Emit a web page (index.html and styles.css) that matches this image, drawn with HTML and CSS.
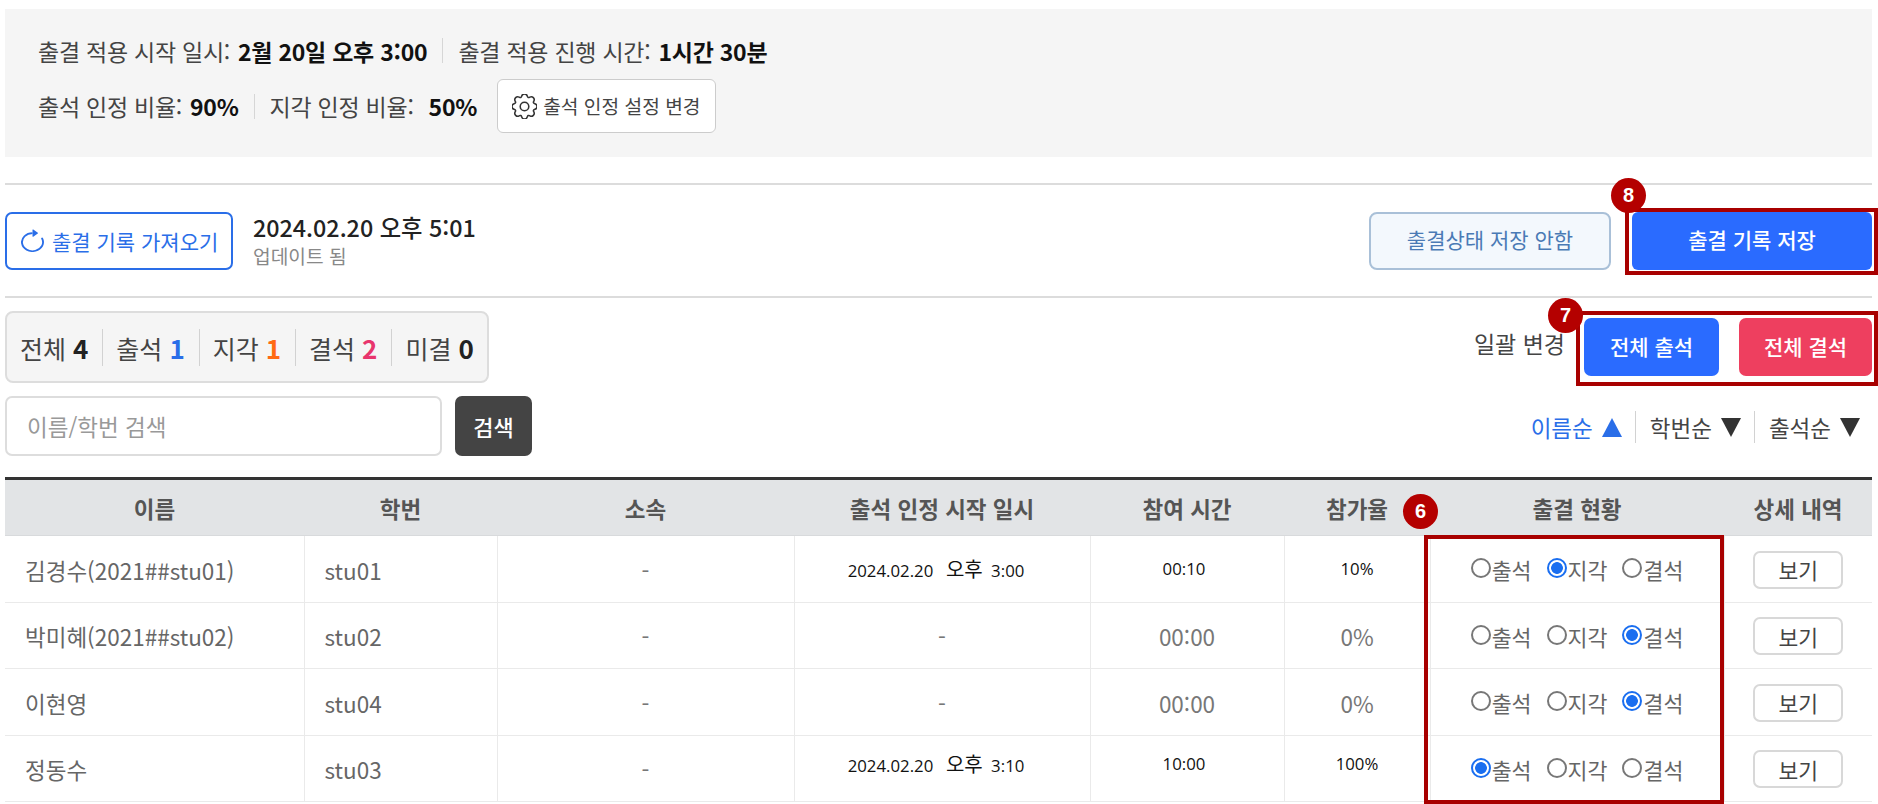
FILE: index.html
```html
<!DOCTYPE html>
<html lang="ko">
<head>
<meta charset="utf-8">
<title>출결 관리</title>
<link rel="stylesheet" href="styles.css">
</head>
<body>
<main class="page">
  <section class="info">
    <div class="info-row">
      <span class="info-label">출결 적용 시작 일시:</span><strong>2월 20일 오후 3:00</strong>
      <i class="info-sep"></i>
      <span class="info-label">출결 적용 진행 시간:</span><strong>1시간 30분</strong>
    </div>
    <div class="info-row">
      <span class="info-label">출석 인정 비율:</span><strong>90%</strong>
      <i class="info-sep"></i>
      <span class="info-label">지각 인정 비율:</span><strong class="wide">50%</strong>
      <button class="btn-setting" type="button">
        <svg class="ico-gear" viewBox="0 0 16 16" fill="none" stroke="#333" stroke-width="1"><circle cx="8" cy="8" r="2.75"/><path d="M9.796 1.343c-.527-1.79-3.065-1.79-3.592 0l-.094.319a.873.873 0 0 1-1.255.52l-.292-.16c-1.64-.892-3.433.902-2.54 2.541l.159.292a.873.873 0 0 1-.52 1.255l-.319.094c-1.79.527-1.79 3.065 0 3.592l.319.094a.873.873 0 0 1 .52 1.255l-.16.292c-.892 1.64.901 3.434 2.541 2.54l.292-.159a.873.873 0 0 1 1.255.52l.094.319c.527 1.79 3.065 1.79 3.592 0l.094-.319a.873.873 0 0 1 1.255-.52l.292.16c1.64.893 3.434-.902 2.54-2.541l-.159-.292a.873.873 0 0 1 .52-1.255l.319-.094c1.79-.527 1.79-3.065 0-3.592l-.319-.094a.873.873 0 0 1-.52-1.255l.16-.292c.893-1.64-.902-3.433-2.541-2.54l-.292.159a.873.873 0 0 1-1.255-.52l-.094-.319z"/></svg>
        출석 인정 설정 변경
      </button>
    </div>
  </section>

  <section class="toolbar">
    <button class="btn-fetch" type="button">
      <svg class="ico-refresh" viewBox="2 0 12 14" preserveAspectRatio="none" fill="#2a6ee8"><path fill-rule="evenodd" d="M8 3a5 5 0 1 0 4.546 2.914.5.5 0 0 1 .908-.417A6 6 0 1 1 8 2v1z"/><path d="M8 4.466V.534a.25.25 0 0 1 .41-.192l2.36 1.966c.12.1.12.284 0 .384L8.41 4.658A.25.25 0 0 1 8 4.466z"/></svg>
      출결 기록 가져오기
    </button>
    <div class="updated">
      <div class="updated-time">2024.02.20 오후 5:01</div>
      <div class="updated-note">업데이트 됨</div>
    </div>
    <div class="toolbar-right">
      <button class="btn-nosave" type="button">출결상태 저장 안함</button>
      <div class="marked">
        <button class="btn-save" type="button">출결 기록 저장</button>
        <span class="outline outline-save"></span>
        <span class="badge badge-8">8</span>
      </div>
    </div>
  </section>

  <section class="filters">
    <div class="filters-left">
      <div class="stats">
        <span class="stat">전체 <b>4</b></span>
        <span class="stat">출석 <b class="c-blue">1</b></span>
        <span class="stat">지각 <b class="c-orange">1</b></span>
        <span class="stat">결석 <b class="c-pink">2</b></span>
        <span class="stat">미결 <b>0</b></span>
      </div>
      <div class="search">
        <input class="search-input" type="text" placeholder="이름/학번 검색">
        <button class="btn-search" type="button">검색</button>
      </div>
    </div>
    <div class="filters-right">
      <div class="bulk">
        <span class="bulk-label">일괄 변경</span>
        <div class="marked bulk-btns">
          <button class="btn-all btn-all-ok" type="button">전체 출석</button>
          <button class="btn-all btn-all-no" type="button">전체 결석</button>
          <span class="outline outline-bulk"></span>
          <span class="badge badge-7">7</span>
        </div>
      </div>
      <div class="sort">
        <span class="sort-item active">이름순 <i class="tri tri-up"></i></span>
        <span class="sort-item">학번순 <i class="tri tri-down"></i></span>
        <span class="sort-item">출석순 <i class="tri tri-down"></i></span>
      </div>
    </div>
  </section>

  <section class="table-wrap">
    <table class="grid">
      <colgroup>
        <col class="col-name"><col class="col-id"><col class="col-org"><col class="col-date"><col class="col-time"><col class="col-rate"><col class="col-status"><col class="col-detail">
      </colgroup>
      <thead>
        <tr><th>이름</th><th>학번</th><th>소속</th><th>출석 인정 시작 일시</th><th>참여 시간</th><th>참가율</th><th>출결 현황</th><th>상세 내역</th></tr>
      </thead>
      <tbody>
        <tr>
          <td class="left">김경수(2021##stu01)</td><td class="left">stu01</td><td>-</td>
          <td class="pasted dated">2024.02.20&nbsp; <span class="ampm">오후</span> 3:00</td><td class="pasted shifted">00:10</td><td class="pasted">10%</td>
          <td><div class="radios">
            <label class="radio"><input type="radio" name="r1">출석</label>
            <label class="radio"><input type="radio" name="r1" checked>지각</label>
            <label class="radio"><input type="radio" name="r1">결석</label>
          </div></td>
          <td><button class="btn-view" type="button">보기</button></td>
        </tr>
        <tr>
          <td class="left">박미혜(2021##stu02)</td><td class="left">stu02</td><td>-</td>
          <td>-</td><td>00:00</td><td>0%</td>
          <td><div class="radios">
            <label class="radio"><input type="radio" name="r2">출석</label>
            <label class="radio"><input type="radio" name="r2">지각</label>
            <label class="radio"><input type="radio" name="r2" checked>결석</label>
          </div></td>
          <td><button class="btn-view" type="button">보기</button></td>
        </tr>
        <tr>
          <td class="left">이현영</td><td class="left">stu04</td><td>-</td>
          <td>-</td><td>00:00</td><td>0%</td>
          <td><div class="radios">
            <label class="radio"><input type="radio" name="r3">출석</label>
            <label class="radio"><input type="radio" name="r3">지각</label>
            <label class="radio"><input type="radio" name="r3" checked>결석</label>
          </div></td>
          <td><button class="btn-view" type="button">보기</button></td>
        </tr>
        <tr>
          <td class="left">정동수</td><td class="left">stu03</td><td>-</td>
          <td class="pasted raised dated">2024.02.20&nbsp; <span class="ampm">오후</span> 3:10</td><td class="pasted raised shifted">10:00</td><td class="pasted raised">100%</td>
          <td><div class="radios">
            <label class="radio"><input type="radio" name="r4" checked>출석</label>
            <label class="radio"><input type="radio" name="r4">지각</label>
            <label class="radio"><input type="radio" name="r4">결석</label>
          </div></td>
          <td><button class="btn-view" type="button">보기</button></td>
        </tr>
      </tbody>
    </table>
    <span class="outline outline-status"></span>
    <span class="badge badge-6">6</span>
  </section>
</main>
</body>
</html>
```
FILE: styles.css
```css
* { box-sizing: border-box; }
html, body { margin: 0; height: 100%; overflow: hidden; background: #fff; }
body { font-family: "Noto Sans CJK KR", "Noto Sans", sans-serif; color: #444; font-size: 22px; }
button { font-family: inherit; cursor: pointer; padding: 0; }
.page { position: relative; height: 804px; padding: 9px 6px 0 5px; }

/* info */
.info { height: 148px; background: #f5f5f5; padding: 13px 0 0 33px; }
.info-row { display: flex; align-items: center; height: 54px; white-space: nowrap; }
.info-row:first-child { height: 57px; }
.info-label { color: #444; font-size: 23px; letter-spacing: -0.25px; }
.info-row strong { color: #111; font-size: 23px; font-weight: 700; margin-left: 8px; letter-spacing: -0.25px; }
.info-row strong.wide { margin-left: 15px; }
.info-sep { width: 1px; height: 25px; background: #d6d6d6; margin: 0 15px; }
.btn-setting { display: flex; align-items: center; gap: 6px; height: 54px; width: 219px; margin-left: 20px; padding-left: 14px; background: #fff; border: 1px solid #ccc; border-radius: 6px; color: #444; font-size: 19.2px; white-space: nowrap; }
.ico-gear { width: 25px; height: 25px; flex: none; }

/* toolbar */
.toolbar { display: flex; align-items: center; height: 115px; margin-top: 26px; border-top: 2px solid #dcdcdc; border-bottom: 2px solid #dcdcdc; }
.btn-fetch { display: flex; align-items: center; gap: 8px; width: 228px; height: 58px; padding-left: 14px; background: #fff; border: 2px solid #2a6ee8; border-radius: 7px; color: #2a6ee8; font-size: 21px; white-space: nowrap; }
.ico-refresh { width: 23px; height: 23px; flex: none; }
.updated { margin-left: 20px; }
.updated-time { color: #222; font-size: 23.3px; font-weight: 500; line-height: 30px; }
.updated-note { color: #888; font-size: 19.2px; line-height: 28px; }
.toolbar-right { display: flex; align-items: center; gap: 21px; margin-left: auto; }
.btn-nosave { width: 242px; height: 58px; padding-bottom: 3px; background: #f3f8fd; border: 2px solid #a9c0d8; border-radius: 8px; color: #4a7ab5; font-size: 21px; }
.btn-save { display: block; width: 240px; height: 58px; padding-bottom: 3px; background: #2a6bff; border: 0; border-radius: 6px; color: #fff; font-size: 21px; font-weight: 500; }
.marked { position: relative; }

/* filters */
.filters { display: flex; justify-content: space-between; padding-top: 13px; }
.filters-left { display: flex; flex-direction: column; gap: 13px; }
.stats { display: flex; align-items: center; width: 484px; height: 72px; background: #f5f5f5; border: 2px solid #ddd; border-radius: 8px; }
.stat { display: block; padding: 0 14px 0 13px; height: 37px; line-height: 37px; font-size: 25px; color: #444; border-right: 1px solid #d2d2d2; white-space: nowrap; }
.stat:last-child { border-right: 0; }
.stat b { color: #222; font-weight: 700; font-size: 26px; }
.stat b.c-blue { color: #2a6ee8; }
.stat b.c-orange { color: #ff6a13; }
.stat b.c-pink { color: #e8356d; }
.search { display: flex; gap: 13px; }
.search-input { width: 437px; height: 60px; padding: 0 20px; border: 2px solid #ddd; border-radius: 7px; background: #fff; font: inherit; font-size: 22.5px; outline: 0; }
.search-input::placeholder { color: #999; opacity: 1; }
.btn-search { width: 77px; height: 60px; background: #444; border: 0; border-radius: 7px; color: #fff; font-size: 22px; font-weight: 500; }

.filters-right { display: flex; flex-direction: column; align-items: flex-end; padding-top: 7px; }
.bulk { display: flex; align-items: center; }
.bulk-label { margin: -9px 19px 0 0; font-size: 23px; color: #444; white-space: nowrap; }
.bulk-btns { display: flex; gap: 20px; }
.btn-all { height: 58px; padding-bottom: 2px; border: 0; border-radius: 7px; color: #fff; font-size: 21px; font-weight: 500; }
.btn-all-ok { width: 135px; background: #2a6bff; }
.btn-all-no { width: 133px; background: #ee3f5f; }
.sort { display: flex; align-items: center; margin-top: 35px; margin-right: 12px; }
.sort-item { display: flex; align-items: center; gap: 9px; height: 32px; padding: 0 13px 0 14px; border-right: 1px solid #d2d2d2; font-size: 22.5px; color: #444; white-space: nowrap; }
.sort-item:last-child { border-right: 0; padding-right: 0; }
.sort-item.active { color: #2a6ee8; }
.tri { width: 0; height: 0; border-left: 10px solid transparent; border-right: 10px solid transparent; }
.tri-up { border-bottom: 19px solid #2a6ee8; }
.tri-down { border-top: 19px solid #333; }

/* table */
.table-wrap { position: relative; margin-top: 21px; }
.grid { width: 1867px; table-layout: fixed; border-collapse: collapse; border-top: 3px solid #333; }
.col-name { width: 299px; }
.col-id { width: 193px; }
.col-org { width: 297px; }
.col-date { width: 296px; }
.col-time { width: 194px; }
.col-rate { width: 146px; }
.col-status { width: 294px; }
.col-detail { width: 148px; }
.grid th { height: 57px; background: #e2e4e6; color: #555; font-size: 22.5px; font-weight: 700; border-bottom: 1px solid #d8dadc; }
.grid td { height: 66.5px; padding: 2px 0 0; text-align: center; color: #777; font-size: 22.5px; border-bottom: 1px solid #eaeaea; border-right: 1px solid #eaeaea; }
.grid td:last-child { border-right: 0; }
.grid td.left { text-align: left; padding-left: 20px; color: #666; }
.grid td.pasted { color: #111; font-family: "Open Sans", "Noto Sans CJK KR", sans-serif; font-size: 16.8px; padding-top: 0; }
.grid td.raised { padding-bottom: 10px; }
.grid td.shifted { padding-right: 6px; }
.grid td.dated { padding-right: 12px; }
.ampm { font-size: 20px; margin: 0 4px; }

.radios { display: flex; justify-content: center; gap: 15px; }
.radio { display: flex; align-items: center; color: #666; font-size: 21.7px; }
.radio input { appearance: none; width: 20px; height: 20px; margin: 0 1px 3px 0; border: 2px solid #777; border-radius: 50%; background: #fff; }
.radio input:checked { border-color: #1a6ef0; background: radial-gradient(circle, #1a6ef0 0 5.5px, #fff 6.2px); }
.btn-view { width: 90px; height: 38px; background: #fff; border: 2px solid #d8d8d8; border-radius: 7px; color: #444; font-size: 21.5px; }

/* annotations */
.outline { position: absolute; border: 4px solid #a80000; pointer-events: none; }
.outline-save { inset: -4px -6px -5px -7px; }
.outline-bulk { inset: -7px -6px -10px -8px; }
.outline-status { left: 1419px; top: 58px; width: 300px; height: 269px; }
.badge { position: absolute; width: 35px; height: 35px; border-radius: 50%; background: #b40000; color: #fff; font: 700 20px/35px "Liberation Sans", sans-serif; text-align: center; }
.badge-8 { left: -21px; top: -34px; }
.badge-7 { left: -36px; top: -20px; }
.badge-6 { left: 1398px; top: 17px; }
```
